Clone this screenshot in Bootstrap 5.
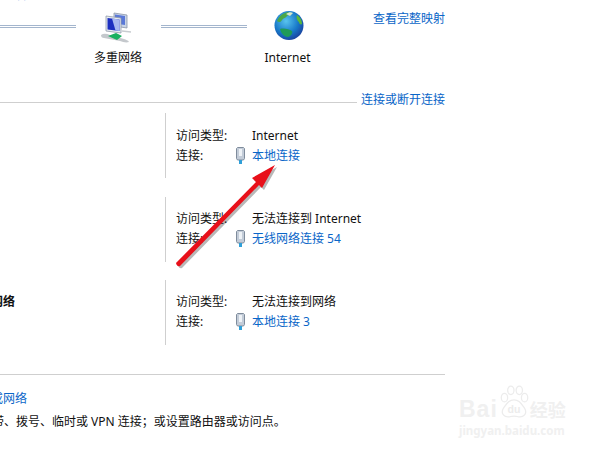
<!DOCTYPE html>
<html lang="zh-CN">
<head>
  <meta charset="UTF-8">
  <meta name="viewport" content="width=device-width, initial-scale=1.0">
  <title>网络和共享中心</title>
  <link href="https://cdn.jsdelivr.net/npm/bootstrap@5.3.1/dist/css/bootstrap.min.css" rel="stylesheet">
  <style>
    html, body { width: 600px; height: 450px; overflow: hidden; background: #fff; }
    body { font: 12px/20px "Noto Sans", "Noto Sans CJK SC", sans-serif; color: #111; }
    a { color: #0a66c8; text-decoration: none; }
    .page-wrap { width: 445px; height: 450px; }
    .clip-top { height: 2px; overflow: hidden; }
    .clip-top a { display: block; margin: -15px 0 0 3px; }
    .map-row { height: 97px; }
    .map-line { height: 3px; margin-top: 23px; border-top: 1px solid #a3b5cd; border-bottom: 1px solid #a3b5cd; }
    .map-node { width: 85px; padding-top: 9px; }
    .map-node svg { display: block; margin: 0 auto 5px; }
    .node-multi { padding-right: 1px; }
    .node-inet { padding-right: 4px; }
    .node-inet svg { position: relative; left: 1px; top: -1px; }
    .map-link { margin: 7px 0 0 41px; }
    .sect-head { height: 13px; }
    .sect-rule { border-top: 1px solid #cfcfcf; margin-top: 3px; }
    .sect-link { margin-top: -5px; line-height: 1; white-space: nowrap; }
    .net-list { padding-top: 1px; }
    .net-row { height: 84px; }
    .net-row:nth-child(2) { height: 83px; }
    .net-row:first-child .net-info { padding-top: 13px; }
    .net-name { flex: 0 0 165px; padding-top: 12px; font-weight: 700; white-space: nowrap; }
    .net-name span { display: block; margin-left: -57px; }
    .net-info { height: 65px; padding: 12px 0 0 10px; border-left: 1px solid #cfcfcf; }
    .info-key { width: 76px; }
    .plug { margin-left: -16px; margin-right: 7px; margin-top: 1px; }
    .foot-rule { border-top: 1px solid #cfcfcf; margin-top: 10px; }
    .foot-text { padding-top: 12px; white-space: nowrap; line-height: 23px; }
    .foot-link { margin-left: -81px; }
    .foot-desc { margin-left: -44px; }
    .arrow-over { position: absolute; left: 0; top: 0; pointer-events: none; }
    .mark-over { position: absolute; left: 459px; top: 385px; width: 120px; color: #f0f0f0; }
    .mark-brand { font: 700 23px/24px "Liberation Sans", sans-serif; letter-spacing: 1px; margin-top: 12px; }
    .mark-cn { font: 700 18px/24px "Noto Sans CJK SC", sans-serif; margin-top: 12px; }
    .mark-url { font: 700 11.500px/14px "Noto Sans", sans-serif; margin-top: 3px; }
    .paw-text { font: 700 10px "Liberation Sans", sans-serif; fill: #ececec; }
  </style>
</head>
<body>
  <div class="page-wrap">
    <div class="clip-top"><a href="#">查看活动网络</a></div>

    <!-- 网络映射 -->
    <div class="map-row d-flex align-items-start">
      <div class="map-line" style="width:76px"></div>
      <div class="map-node node-multi text-center">
        <svg width="36" height="32" viewBox="0 0 36 32">
          <path d="M14 2l13 2v13l-13-2z" fill="#c9d4e6" stroke="#8b96a8" stroke-width=".8"/>
          <path d="M15 3.500l10 1.500v9l-10-1.500z" fill="#5a78d8"/>
          <path d="M6 5l15 2v15L6 20z" fill="#e8ecf2" stroke="#8f99a8" stroke-width=".8"/>
          <path d="M7.500 7l12 1.500v11.500l-12-1.500z" fill="#1c2fc0"/>
          <path d="M12 7.500l7.500 1v11.500l-4-.5z" fill="#a8b8f0"/>
          <path d="M1 24c3-2 6-1 9 0l14 4c2 1 4 1 5 3-3 1-6 0-9-1L4 27c-2 0-3-1-3-3z" fill="#c4c8cc"/>
          <path d="M8 25l8-3 6 3-5 4z" fill="#18b060"/>
          <path d="M22 20l9 1" stroke="#c8ccd0" stroke-width="1.500"/>
        </svg>
        多重网络
      </div>
      <div class="map-line" style="width:86px"></div>
      <div class="map-node node-inet text-center">
        <svg width="32" height="32" viewBox="0 0 32 32">
          <defs>
            <radialGradient id="globeFill" cx=".4" cy=".35" r=".7">
              <stop offset="0" stop-color="#58c4ee"/>
              <stop offset=".6" stop-color="#1878c8"/>
              <stop offset="1" stop-color="#1a3f9c"/>
            </radialGradient>
          </defs>
          <circle cx="16" cy="15.500" r="14.500" fill="url(#globeFill)"/>
          <path d="M4 11c2-5 6-8 11-9 2 1 1 3-1 4-1 2-4 2-5 4-1 2-3 3-5 1z" fill="#4aa848"/>
          <path d="M24 5c3 2 5 5 5 9-1 1-3 0-3-2-2-1-3-5-2-7z" fill="#5ab838"/>
          <path d="M7 19c4-1 9 0 12 2 1 2-1 5-4 6-4 0-7-4-8-8z" fill="#1f9a58"/>
          <path d="M13 4c3-2 5-2 7-1l-3 3z" fill="#d8e8c8"/>
        </svg>
        Internet
      </div>
      <a class="map-link" href="#">查看完整映射</a>
    </div>

    <!-- 活动网络 -->
    <div class="sect-head d-flex align-items-start">
      <div class="sect-rule flex-grow-1"></div>
      <a class="sect-link ms-1" href="#">连接或断开连接</a>
    </div>

    <div class="net-list" id="netList"></div>

    <div class="foot-rule"></div>
    <div class="foot-text">
      <div class="foot-link"><a href="#">设置新的连接或网络</a></div>
      <div class="foot-desc">设置宽带、拨号、临时或 VPN 连接；或设置路由器或访问点。</div>
    </div>
  </div>

  <!-- 红色箭头 -->
  <svg class="arrow-over" width="600" height="450" viewBox="0 0 600 450">
    <path d="M178 265L258 184L254 180L277 167L264 190L261 187L182 268Q179 269 178 265z" fill="#333" opacity=".35"/>
    <path d="M176 263L256 182L252 178L275 165L262 188L259 185L180 266Q177 267 176 263z" fill="#e8101a"/>
  </svg>

  <!-- 水印 -->
  <div class="mark-over">
    <div class="d-flex align-items-start">
      <span class="mark-brand">Bai</span>
      <svg width="32" height="36" viewBox="0 0 28 34">
        <g fill="none" stroke="#ececec" stroke-width="1.200">
          <ellipse cx="5" cy="12" rx="3" ry="4"/><ellipse cx="11" cy="5" rx="3" ry="4"/>
          <ellipse cx="19" cy="5" rx="3" ry="4"/><ellipse cx="24" cy="12" rx="3" ry="4"/>
          <path d="M14 14c5 0 7 4 10 8 3 5-1 9-6 8-3-1-5-1-8 0-5 1-9-3-6-8 3-4 5-8 10-8z"/>
        </g>
        <text class="paw-text" x="14" y="26" text-anchor="middle">du</text>
      </svg>
      <span class="mark-cn">经验</span>
    </div>
    <div class="mark-url">jingyan.baidu.com</div>
  </div>

  <script src="https://cdn.jsdelivr.net/npm/bootstrap@5.3.1/dist/js/bootstrap.bundle.min.js"></script>
  <script>
    // 网络列表
    const networks = [
      { name: "", access: "Internet", conn: "本地连接" },
      { name: "", access: "无法连接到 Internet", conn: "无线网络连接 54" },
      { name: "未识别的网络", access: "无法连接到网络", conn: "本地连接 3" },
    ];

    const plugIcon = `
      <svg class="plug" width="9" height="17" viewBox="0 0 9 17">
        <path d="M1.500 .5h6l1 1v10l-1 1.500h-6l-1-1.500v-10z" fill="#c3ccd8" stroke="#7f8c9c"/>
        <rect x="3" y="2" width="3" height="7" fill="#eef2f6"/>
        <rect x="3" y="13" width="3" height="4" fill="#2f9fd8"/>
      </svg>`;

    document.getElementById("netList").innerHTML = networks.map((net) => `
      <div class="net-row d-flex">
        <div class="net-name"><span>${net.name}</span></div>
        <div class="net-info flex-grow-1">
          <div class="d-flex"><div class="info-key">访问类型:</div><div>${net.access}</div></div>
          <div class="d-flex"><div class="info-key">连接:</div>${plugIcon}<a href="#">${net.conn}</a></div>
        </div>
      </div>`).join("");
  </script>
</body>
</html>
